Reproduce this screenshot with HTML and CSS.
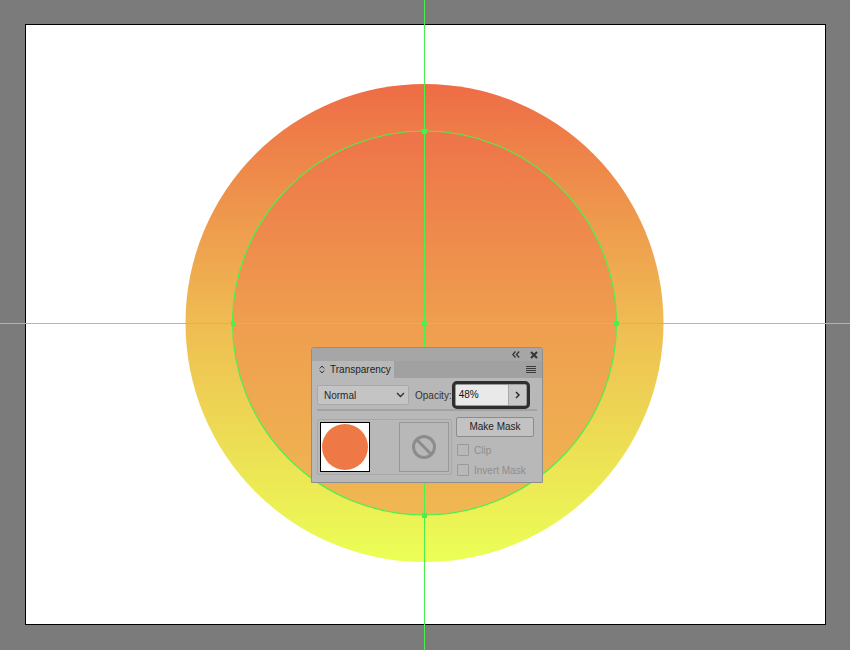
FILE: index.html
```html
<!DOCTYPE html>
<html>
<head>
<meta charset="utf-8" />
<title>Transparency</title>
<link rel="stylesheet" href="styles.css">
</head>
<body>
    <div class="stage">
        <svg class="canvas" width="850" height="650" viewBox="0 0 850 650">
            <defs>
                <linearGradient id="outerFill" x1="0" y1="0" x2="0" y2="1">
                    <stop offset="0" stop-color="#ee6c46" />
                    <stop offset="0.5" stop-color="#efbc52" />
                    <stop offset="1" stop-color="#ebff56" />
                </linearGradient>
                <linearGradient id="innerFill" x1="0" y1="0" x2="0" y2="1">
                    <stop offset="0" stop-color="#ee7349" />
                    <stop offset="0.5" stop-color="#ef9e4f" />
                    <stop offset="1" stop-color="#efb852" />
                </linearGradient>
            </defs>
            <rect x="25.5" y="24.5" width="800" height="600" fill="#fff" stroke="#000" />
            <circle cx="424.5" cy="323" r="239" fill="url(#outerFill)" />
            <circle cx="424.5" cy="323" r="192" fill="url(#innerFill)" stroke="#4cf04c" stroke-width="1.2" />
            <line x1="0" y1="323.5" x2="850" y2="323.5" stroke="#6ae86a" />
            <line x1="424.5" y1="0" x2="424.5" y2="650" stroke="#4cf04c" />
            <!-- anchors -->
            <rect x="422" y="129" width="5" height="5" fill="#4cf04c" />
            <rect x="231" y="321" width="5" height="5" fill="#4cf04c" />
            <rect x="614" y="321" width="5" height="5" fill="#4cf04c" />
            <rect x="422" y="321" width="5" height="5" fill="#4cf04c" />
            <rect x="422" y="513" width="5" height="5" fill="#4cf04c" />
        </svg>

        <div class="panel">
            <div class="panel_top">
                <svg width="8" height="7" viewBox="0 0 8 7"><path d="M3.5 0.5 L0.8 3.5 L3.5 6.5 M7.2 0.5 L4.5 3.5 L7.2 6.5" fill="none" stroke="#333" stroke-width="1.3" /></svg>
                <svg width="8" height="8" viewBox="0 0 8 8"><path d="M1 1 L7 7 M7 1 L1 7" stroke="#333" stroke-width="2" /></svg>
            </div>
            <div class="panel_tabs">
                <div class="tab">
                    <svg width="6" height="9" viewBox="0 0 6 9"><path d="M0.8 3.5 L3 1 L5.2 3.5 M0.8 5.5 L3 8 L5.2 5.5" fill="none" stroke="#333" stroke-width="1" /></svg>
                    <span>Transparency</span>
                </div>
                <div class="menu_icon"><i></i><i></i><i></i><i></i></div>
            </div>
            <div class="panel_body">
                <div class="row_mode">
                    <div class="select">
                        <span>Normal</span>
                        <svg width="9" height="6" viewBox="0 0 9 6"><path d="M1 1 L4.5 4.5 L8 1" fill="none" stroke="#333" stroke-width="1.4" /></svg>
                    </div>
                    <span class="label">Opacity:</span>
                    <div class="opacity_box">
                        <span class="opacity_value">48%</span>
                        <span class="opacity_btn">
                            <svg width="5" height="8" viewBox="0 0 5 8"><path d="M1 1 L4 4 L1 7" fill="none" stroke="#222" stroke-width="1.4" /></svg>
                        </span>
                    </div>
                </div>
                <div class="separator"></div>
                <div class="row_mask">
                    <div class="thumbs">
                        <div class="thumb"><div class="dot"></div></div>
                        <div class="mask_thumb">
                            <svg width="26" height="26" viewBox="0 0 26 26"><circle cx="13" cy="13" r="10.5" fill="none" stroke="#8c8c8c" stroke-width="3" /><path d="M5.8 5.8 L20.2 20.2" stroke="#8c8c8c" stroke-width="3" /></svg>
                        </div>
                    </div>
                    <div class="mask_opts">
                        <div class="btn_mask">Make Mask</div>
                        <label class="check"><i></i>Clip</label>
                        <label class="check"><i></i>Invert Mask</label>
                    </div>
                </div>
            </div>
        </div>
    </div>
</body>
</html>
```

FILE: styles.css
```css
* {
    margin:0;
    padding:0;
    box-sizing:border-box;
}
body,html {
    width:100%;
    background:#7b7b7b;
    font-family:"Liberation Sans", Arial, sans-serif;
    font-size:10px;
}
.stage {
    position:relative;
    width:850px;
    height:650px;
    overflow:hidden;
}
.canvas {
    display:block;
}

/* floating panel */
.panel {
    position:absolute;
    left:311px;
    top:347px;
    width:232px;
    height:136px;
    border:1px solid #8e8e8e;
    border-radius:3px 3px 0 0;
    background:#b8b8b8;
    color:#2a2a2a;
}
.panel_top {
    height:13px;
    background:#a6a6a6;
    display:flex;
    justify-content:flex-end;
    align-items:center;
    gap:10px;
    padding-right:4px;
    border-radius:3px 3px 0 0;
}
.panel_tabs {
    height:17px;
    background:#a1a1a1;
    display:flex;
    justify-content:space-between;
    align-items:stretch;
}
.tab {
    width:82px;
    background:#b8b8b8;
    display:flex;
    align-items:center;
    gap:5px;
    padding-left:7px;
    color:#1e1e1e;
}
.menu_icon {
    display:flex;
    flex-direction:column;
    justify-content:center;
    gap:1px;
    padding-right:6px;
}
.menu_icon i {
    display:block;
    width:10px;
    height:1px;
    background:#3a3a3a;
}
.panel_body {
    padding:6px 5px 0 5px;
}
.row_mode {
    display:flex;
    align-items:center;
    height:22px;
}
.select {
    width:92px;
    height:20px;
    background:#c4c4c4;
    border:1px solid #a9a9a9;
    border-radius:2px;
    display:flex;
    justify-content:space-between;
    align-items:center;
    padding:0 3px 0 6px;
    color:#1f2433;
}
.label {
    margin-left:6px;
    color:#333;
}
.opacity_box {
    margin-left:0;
    width:78px;
    height:28px;
    border:3px solid #2f2f2f;
    border-radius:5px;
    padding:1px;
    display:flex;
    background:#9a9a9a;
}
.opacity_value {
    flex:1;
    background:#e9e9e9;
    padding-left:3px;
    line-height:20px;
    color:#111;
}
.opacity_btn {
    width:18px;
    background:#c8c8c8;
    border-left:1px solid #a8a8a8;
    display:flex;
    align-items:center;
    justify-content:center;
}
.separator {
    height:2px;
    background:#a2a2a2;
    margin:3px 0 6px 0;
}
.row_mask {
    display:flex;
    gap:4px;
}
.thumbs {
    width:135px;
    height:56px;
    border:1px solid #a8a8a8;
    border-radius:2px;
    display:flex;
    justify-content:space-between;
    padding:2px 2px 0 2px;
    margin-top:2px;
}
.thumb {
    width:50px;
    height:50px;
    border:1px solid #000;
    background:#fff;
    display:flex;
    align-items:center;
    justify-content:center;
}
.dot {
    width:46px;
    height:46px;
    border-radius:50%;
    background:#ee7947;
}
.mask_thumb {
    width:50px;
    height:50px;
    border:1px solid #979797;
    display:flex;
    align-items:center;
    justify-content:center;
}
.mask_opts {
    display:flex;
    flex-direction:column;
    width:78px;
}
.btn_mask {
    height:20px;
    border:1px solid #8c8c8c;
    border-radius:2px;
    background:#c2c2c2;
    text-align:center;
    line-height:18px;
    color:#222;
}
.check {
    display:flex;
    align-items:center;
    gap:5px;
    color:#8e8e8e;
    margin-top:6px;
    padding-left:1px;
    height:14px;
}
.check + .check {
    margin-top:6px;
}
.check i {
    display:block;
    width:12px;
    height:12px;
    border:1px solid #9a9a9a;
    border-radius:1px;
}
```
